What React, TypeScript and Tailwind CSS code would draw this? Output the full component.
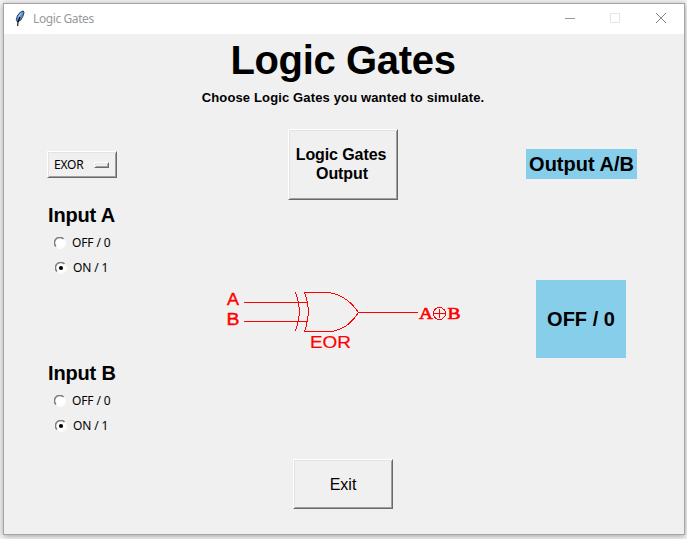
import React from "react";

const raised =
  "border border-t-white border-l-white border-r-[#696969] border-b-[#696969] shadow-[inset_1px_1px_0_#e3e3e3,inset_-1px_-1px_0_#a0a0a0]";

function Radio({ label, checked = false }: { label: string; checked?: boolean }) {
  return (
    <div className={`flex h-[25px] items-center ${checked ? "pl-[8px]" : "pl-[7px]"}`}>
      <svg width="12" height="12" viewBox="0 0 12 12" className="shrink-0">
        <circle cx="6" cy="6" r="5" fill="#fff" />
        <path d="M2 9.5A5 5 0 0 1 9.5 2" fill="none" stroke="#7c7c7c" strokeWidth="1.5" />
        <path d="M10 2.5A5.2 5.2 0 0 1 2.5 10" fill="none" stroke="#fff" strokeWidth="1" />
        {checked && <circle cx="6" cy="6" r="2.1" fill="#000" />}
      </svg>
      <span className="ml-[6px] whitespace-nowrap font-['Noto_Sans',sans-serif] text-[12px] leading-[16px] tracking-[-0.12px]">
        {label}
      </span>
    </div>
  );
}

function InputGroup({ title }: { title: string }) {
  return (
    <div>
      <h2 className="mb-px h-[28px] whitespace-nowrap pl-px text-[20px] font-bold leading-[28px] tracking-[-0.15px]">{title}</h2>
      <Radio label="OFF / 0" />
      <Radio label="ON / 1" checked />
    </div>
  );
}

function Feather() {
  return (
    <svg width="10" height="17" viewBox="0 0 10 17" className="ml-[11px] mt-[-2px] shrink-0">
      <path d="M8.3 1L5.5 2L2.5 5.5L1.3 9.5L2.5 12L5.8 10L7.8 6.5L9 2.5Z" fill="#5593e0" stroke="#1c2a3c" strokeWidth="0.9" />
      <path d="M6.3 2.8L3.2 7.5" stroke="#b8dafc" strokeWidth="1" />
      <path d="M5 7L3 12L2.7 16" fill="none" stroke="#000" strokeWidth="1.1" />
    </svg>
  );
}

function GateDiagram() {
  return (
    <svg width="240" height="64" viewBox="225 288 240 64" fill="none" stroke="#f00" strokeWidth="1" shapeRendering="crispEdges">
      <path d="M244 302.5H308M244 321.5H308M359 312.5H418" />
      <path d="M295.5 292C300.5 306 300.5 317 295.5 331" />
      <path d="M304.5 292.5C309.5 306 309.5 317 304.5 331.5" />
      <path d="M304 292.5H328C340 294 350 300 358.5 312.5C350 325 343 329 332 331.5H304" />
      <circle cx="439.5" cy="313.5" r="6" />
      <path d="M433 313.5H446M439.5 309V318" />
      <g fill="#f00" stroke="none" fontFamily="Liberation Sans, Arial, sans-serif" fontSize="17">
        <text x="227" y="305" textLength="12" lengthAdjust="spacingAndGlyphs" stroke="#f00" strokeWidth="0.4">A</text>
        <text x="226.5" y="325" textLength="13" lengthAdjust="spacingAndGlyphs" stroke="#f00" strokeWidth="0.4">B</text>
        <text x="310" y="348" textLength="41" lengthAdjust="spacingAndGlyphs" stroke="#f00" strokeWidth="0.2">EOR</text>
      </g>
      <g fill="#f00" stroke="#f00" strokeWidth="0.6" fontFamily="Liberation Serif, Times New Roman, serif" fontSize="16">
        <text x="419" y="319" textLength="14" lengthAdjust="spacingAndGlyphs">A</text>
        <text x="447.5" y="319" textLength="13" lengthAdjust="spacingAndGlyphs">B</text>
      </g>
    </svg>
  );
}

export default function App() {
  return (
    <div className="h-[539px] w-[687px] overflow-hidden bg-[#f4f4f4] pl-[3px] pt-[3px] font-['Liberation_Sans',Arial,sans-serif] text-black">
      <div className="flex h-[532px] w-[682px] flex-col border border-[#a5a5a5] bg-[#f0f0f0] shadow-[0_1px_6px_rgba(0,0,0,0.35)]">
        <div className="flex h-[30px] shrink-0 items-center bg-white">
          <Feather />
          <span className="ml-[8px] font-['Noto_Sans',sans-serif] text-[12px] leading-[16px] tracking-[-0.4px] text-[#999]">Logic Gates</span>
          <svg width="102" height="12" viewBox="0 0 102 12" fill="none" className="ml-auto mr-[17px] mt-[-2px]" shapeRendering="crispEdges">
            <path d="M0 6.5H10" stroke="#999" />
            <rect x="45.5" y="1.5" width="9" height="9" stroke="#e5e5e5" />
            <path d="M91 1L101 11M101 1L91 11" stroke="#888" shapeRendering="auto" />
          </svg>
        </div>
        <header className="flex h-[83px] flex-col items-center">
          <h1 className="h-[53px] whitespace-nowrap pr-[2px] text-[40px] font-bold leading-[53px] tracking-[-0.35px]">Logic Gates</h1>
          <p className="whitespace-nowrap pr-[2px] text-[13px] font-bold leading-[22px] tracking-[0.14px]">Choose Logic Gates you wanted to simulate.</p>
        </header>
        <main className="flex h-[342px]">
          <section className="flex w-[160px] flex-col pl-[43px] pt-[34px]">
            <div className={`flex h-[27px] w-[70px] items-center justify-between pl-[6px] pr-[7px] ${raised}`}>
              <span className="font-['Noto_Sans',sans-serif] text-[12px] leading-[16px] tracking-[-0.2px]">EXOR</span>
              <span className={`h-[6px] w-[15px] ${raised}`} />
            </div>
            <div className="mt-[23px]">
              <InputGroup title="Input A" />
            </div>
            <div className="mt-[79px]">
              <InputGroup title="Input B" />
            </div>
          </section>
          <section className="flex w-[358px] flex-col items-center pt-[12px]">
            <button className={`h-[71px] w-[110px] pb-[2px] pr-[4px] text-[16px] font-bold leading-[19px] tracking-[-0.1px] ${raised}`}>
              Logic Gates
              <br />
              <span className="pl-[2px]">Output</span>
            </button>
            <div className="mt-[88px] pl-[4px]">
              <GateDiagram />
            </div>
          </section>
          <section className="flex w-[118px] flex-col items-center pt-[32px]">
            <div className="h-[30px] w-[111px] whitespace-nowrap bg-[#87ceeb] pl-px text-center text-[20px] font-bold leading-[30px]">Output A/B</div>
            <div className="mt-[101px] h-[78px] w-[90px] whitespace-nowrap bg-[#87ceeb] text-center text-[20px] font-bold leading-[78px]">OFF / 0</div>
          </section>
        </main>
        <footer className="flex justify-center pr-[2px]">
          <button className={`h-[50px] w-[100px] text-[16px] leading-[19px] ${raised}`}>Exit</button>
        </footer>
      </div>
    </div>
  );
}
